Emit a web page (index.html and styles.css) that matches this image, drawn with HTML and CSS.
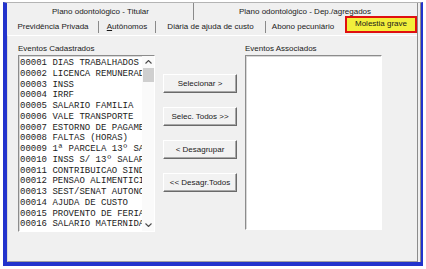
FILE: index.html
```html
<!DOCTYPE html>
<html lang="pt-BR">
  <head>
    <meta charset="UTF-8" />
    <title>Eventos - Molestia grave</title>
    <link rel="stylesheet" href="styles.css">
  </head>
  <body>
    <div class="window">
      <div class="sheet">
        <!-- Back row of tabs -->
        <div class="tab-row back-row">
          <div class="tab tab-titular">Plano odontológico - Titular</div>
          <div class="tab tab-dep">Plano odontológico - Dep./agregados</div>
        </div>

        <!-- Front row of tabs -->
        <div class="tab-row front-row">
          <div class="tab tab-prev">Previdência Privada</div>
          <div class="tab tab-auto"><u>A</u>utônomos</div>
          <div class="tab tab-diaria">Diária de ajuda de custo</div>
          <div class="tab tab-abono">Abono pecuniário</div>
          <div class="tab tab-active">Molestia grave</div>
        </div>

        <!-- Tab page -->
        <div class="panel">
          <div class="group">
            <div class="caption">Eventos Cadastrados</div>
            <div class="listbox">
              <ul class="items">
                <li>00001 DIAS TRABALHADOS</li>
                <li>00002 LICENCA REMUNERADA</li>
                <li>00003 INSS</li>
                <li>00004 IRRF</li>
                <li>00005 SALARIO FAMILIA</li>
                <li>00006 VALE TRANSPORTE</li>
                <li>00007 ESTORNO DE PAGAMENTO</li>
                <li>00008 FALTAS (HORAS)</li>
                <li>00009 1ª PARCELA 13º SALARIO</li>
                <li>00010 INSS S/ 13º SALARIO</li>
                <li>00011 CONTRIBUICAO SINDICAL</li>
                <li>00012 PENSAO ALIMENTICIA</li>
                <li>00013 SEST/SENAT AUTONOMO</li>
                <li>00014 AJUDA DE CUSTO</li>
                <li>00015 PROVENTO DE FERIAS</li>
                <li>00016 SALARIO MATERNIDADE</li>
              </ul>
              <div class="scrollbar">
                <span class="arrow">
                  <svg width="7" height="4" viewBox="0 0 7 4"><polyline points="0.5,3.5 3.5,0.5 6.5,3.5" fill="none" stroke="#4a4a4a" stroke-width="1.1"/></svg>
                </span>
                <span class="thumb"></span>
                <span class="track"></span>
                <span class="arrow">
                  <svg width="7" height="4" viewBox="0 0 7 4"><polyline points="0.5,0.5 3.5,3.5 6.5,0.5" fill="none" stroke="#4a4a4a" stroke-width="1.1"/></svg>
                </span>
              </div>
            </div>
          </div>

          <div class="actions">
            <button class="btn">Selecionar &gt;</button>
            <button class="btn">Selec. Todos &gt;&gt;</button>
            <button class="btn">&lt; Desagrupar</button>
            <button class="btn">&lt;&lt; Desagr.Todos</button>
          </div>

          <div class="group">
            <div class="caption">Eventos Associados</div>
            <div class="listbox listbox-assoc"></div>
          </div>
        </div>
      </div>
    </div>
  </body>
</html>
```

FILE: styles.css
```css
body {
  margin: 0;
  background-color: #ffffff;
  font-family: "Liberation Sans", Arial, sans-serif;
  font-size: 8px;
  color: #1a1a1a;
}

.window {
  margin: 2px 0 0 3px;
  width: 413px;
  height: 259px;
  border-top: 1px solid #b4b4b4;
  border-left: 4px solid #2233cc;
  border-right: 3px solid #2233cc;
  border-bottom: 4px solid #2233cc;
  background-color: #f0f0f0;
  display: flex;
}

.sheet {
  flex: 1;
  margin-right: 1px;
  border-right: 4px double #8c8c8c;
  display: flex;
  flex-direction: column;
}

.tab-row {
  display: flex;
  height: 16px;
  flex-shrink: 0;
}

.tab {
  box-sizing: border-box;
  text-align: center;
  white-space: nowrap;
}

.back-row .tab {
  height: 17px;
  padding-top: 3px;
  line-height: 12px;
}

.tab-titular {
  margin-left: 1px;
  width: 186px;
  border-right: 1px solid #8a8a8a;
}

.tab-dep {
  width: 222px;
}

.front-row .tab {
  margin-top: 2px;
  height: 12px;
  line-height: 12px;
  border-right: 1px solid #8a8a8a;
}

.tab-prev {
  margin-left: 1px;
  width: 91px;
}

.tab-auto {
  width: 57px;
}

.tab-diaria {
  width: 110px;
}

.front-row .tab-abono {
  width: 74px;
  border-right: none;
}

.front-row .tab-active {
  margin-top: -3px;
  margin-left: 5px;
  width: 72px;
  height: 17px;
  line-height: 12px;
  border: 2px solid #e01010;
  background-color: #f2ef3c;
  position: relative;
  z-index: 1;
}

.panel {
  flex: 1;
  display: flex;
  gap: 8px;
  padding: 7px 0 0 10px;
  border-top: 1px solid #ffffff;
  border-left: 1px solid #dadada;
  border-bottom: 1px solid #a0a0a0;
}

.group {
  width: 137px;
  display: flex;
  flex-direction: column;
}

.caption {
  height: 12px;
  line-height: 11px;
}

.listbox {
  box-sizing: border-box;
  height: 177px;
  display: flex;
  background-color: #ffffff;
  border: 1px solid;
  border-color: #8c8c8c #ffffff #ffffff #8c8c8c;
  box-shadow: inset 1px 1px 0 #d8d8d8;
}

.listbox-assoc {
  height: 175px;
}

.items {
  flex: 1;
  margin: 0;
  padding: 2px 0 0 1px;
  list-style: none;
  overflow: hidden;
  font-family: "Liberation Mono", "Courier New", monospace;
  font-size: 9px;
  line-height: 10.75px;
  color: #1c1c1c;
}

.items li {
  white-space: nowrap;
}

.scrollbar {
  width: 12px;
  display: flex;
  flex-direction: column;
  align-items: center;
  background-color: #fafafa;
}

.arrow {
  height: 12px;
  display: flex;
  align-items: center;
  justify-content: center;
}

.thumb {
  width: 11px;
  height: 14px;
  background-color: #cfcfcf;
}

.track {
  flex: 1;
}

.actions {
  width: 74px;
  display: flex;
  flex-direction: column;
  gap: 14px;
  padding-top: 31px;
}

.btn {
  height: 19px;
  padding: 0;
  font-family: "Liberation Sans", Arial, sans-serif;
  font-size: 8px;
  color: #1a1a1a;
  background-color: #f2f2f2;
  border: 1px solid;
  border-color: #ffffff #6a6a6a #6a6a6a #ffffff;
  box-shadow: inset -1px -1px 0 #a8a8a8;
}
```
